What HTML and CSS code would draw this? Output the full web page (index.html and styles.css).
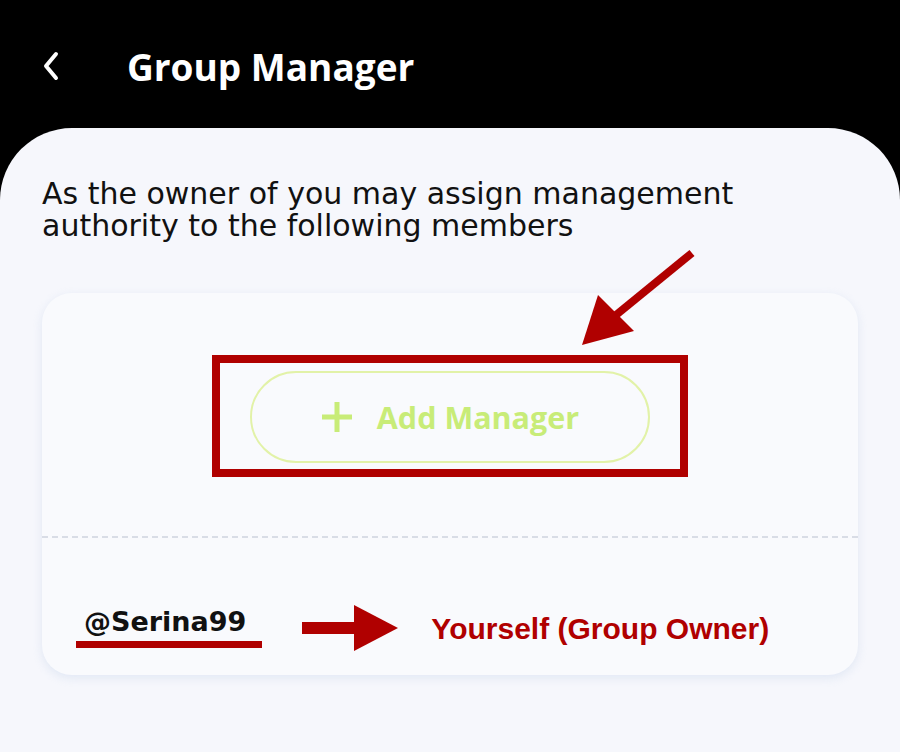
FILE: index.html
```html
<!DOCTYPE html>
<html lang="en">
<head>
    <meta charset="UTF-8">
    <meta name="viewport" content="width=device-width, initial-scale=1.0">
    <title>Group Manager</title>
    <link rel="stylesheet" href="styles.css">
</head>
<body>

    <div class="topbar">
        <button class="back-btn" aria-label="Back">
            <svg width="18" height="30" viewBox="0 0 18 30">
                <path d="M14 3 L4 15 L14 27" fill="none" stroke="#fff" stroke-width="4" stroke-linecap="round" stroke-linejoin="round"/>
            </svg>
        </button>
        <h1 class="title">Group Manager</h1>
    </div>

    <div class="panel">
        <p class="intro">As the owner of you may assign management authority to the following members</p>

        <div class="card">
            <!-- annotation arrow pointing at the button -->
            <svg class="pointer" width="140" height="110" viewBox="0 0 140 110">
                <line x1="122" y1="8" x2="46" y2="70" stroke="#b00000" stroke-width="8"/>
                <polygon points="12,100 28,50 64,86" fill="#b00000"/>
            </svg>

            <div class="card-top">
                <div class="highlight">
                    <button class="add-btn">
                        <svg class="plus" width="32" height="32" viewBox="0 0 32 32">
                            <path d="M16 1 V31 M1 16 H31" stroke="#c8ec78" stroke-width="5"/>
                        </svg>
                        Add Manager
                    </button>
                </div>
            </div>

            <div class="card-bottom">
                <div class="owner-row">
                    <span class="owner-name">@Serina99</span>
                    <svg class="right-arrow" width="96" height="46" viewBox="0 0 96 46">
                        <rect x="0" y="17" width="54" height="12" fill="#b00000"/>
                        <polygon points="52,0 96,23 52,46" fill="#b00000"/>
                    </svg>
                    <span class="owner-note">Yourself (Group Owner)</span>
                </div>
            </div>
        </div>
    </div>

</body>
</html>
```

FILE: styles.css
```css
body {
    margin: 0;
    background: #000;
    font-family: 'DejaVu Sans', 'Noto Sans', sans-serif;
    height: 752px;
    overflow: hidden;
    display: flex;
    flex-direction: column;
}

.topbar {
    height: 128px;
    display: flex;
    align-items: center;
    padding-left: 40px;
    box-sizing: border-box;
}

.back-btn {
    background: none;
    border: none;
    padding: 0;
    width: 22px;
    height: 30px;
    margin-top: 4px;
    cursor: pointer;
}

.title {
    margin: 4px 0 0 65px;
    color: #fff;
    font-family: 'Open Sans', sans-serif;
    font-size: 37px;
    font-weight: 700;
}

.panel {
    flex: 1;
    background: #f6f7fc;
    border-radius: 72px 72px 0 0;
    padding: 50px 42px 0;
}

.intro {
    margin: 0;
    max-width: 740px;
    font-size: 30px;
    line-height: 32px;
    color: #111;
}

.card {
    position: relative;
    margin-top: 51px;
    background: #f9fafd;
    border-radius: 30px;
    box-shadow: 0 3px 10px rgba(200, 212, 235, 0.45);
}

.pointer {
    position: absolute;
    left: 528px;
    top: -48px;
}

.card-top {
    height: 245px;
    display: flex;
    justify-content: center;
    padding-top: 62px;
    box-sizing: border-box;
    border-bottom: 2px dashed #d9dde6;
}

.highlight {
    width: 476px;
    height: 122px;
    box-sizing: border-box;
    border: 8px solid #b00000;
    display: flex;
    align-items: center;
    justify-content: center;
}

.add-btn {
    width: 400px;
    height: 92px;
    margin-top: 2px;
    border: 2px solid #e2f2a8;
    border-radius: 46px;
    background: transparent;
    color: #c8ec78;
    font-family: 'Open Sans', sans-serif;
    font-size: 30.5px;
    font-weight: 700;
    display: flex;
    align-items: center;
    justify-content: center;
    padding: 0;
}

.plus {
    margin-right: 24px;
}

.card-bottom {
    height: 137px;
    display: flex;
    align-items: center;
    padding-left: 34px;
}

.owner-row {
    display: flex;
    align-items: center;
    margin-top: 32px;
}

.owner-name {
    font-size: 27px;
    font-weight: 700;
    color: #111;
    padding: 0 16px 4px 8px;
    border-bottom: 7px solid #b00000;
    margin-top: 8px;
}

.right-arrow {
    margin-left: 40px;
    margin-top: 10px;
}

.owner-note {
    margin-left: 33px;
    font-family: 'Liberation Sans', Arial, sans-serif;
    font-weight: 700;
    font-size: 30px;
    color: #b00000;
    margin-top: 12px;
}
```
